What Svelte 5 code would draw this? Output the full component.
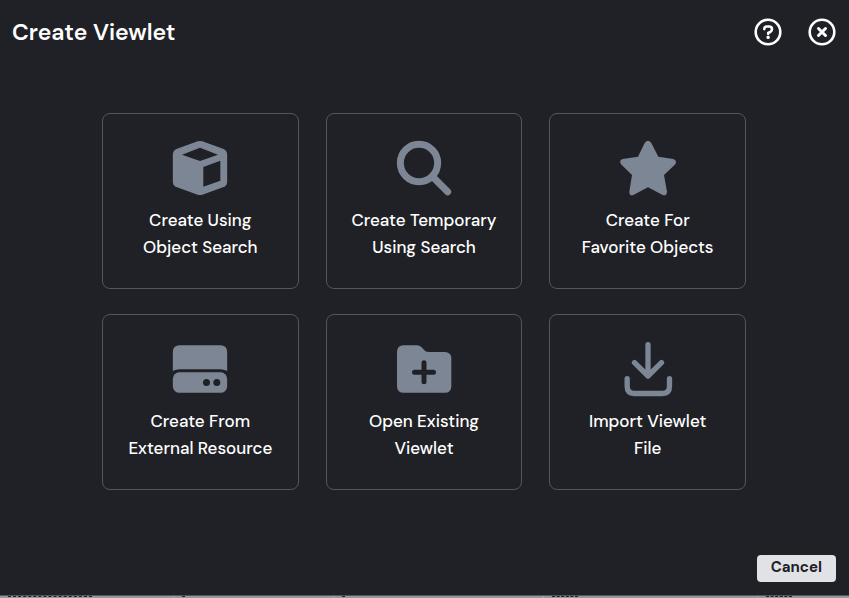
<script>
    const options = [
        { icon: 'cube', lines: ['Create Using', 'Object Search'] },
        { icon: 'search', lines: ['Create Temporary', 'Using Search'] },
        { icon: 'star', lines: ['Create For', 'Favorite Objects'] },
        { icon: 'drive', lines: ['Create From', 'External Resource'] },
        { icon: 'folder', lines: ['Open Existing', 'Viewlet'] },
        { icon: 'import', lines: ['Import Viewlet', 'File'] }
    ];

    let selected = $state(null);
    let open = $state(true);

    const close = () => open = false;
</script>

<div class="page">
    {#if open}
        <div class="dialog" role="dialog" aria-labelledby="dialog-title">
            <header>
                <h1 id="dialog-title">Create Viewlet</h1>
                <div class="actions">
                    <button class="round" aria-label="Help">
                        <svg viewBox="0 0 28 28">
                            <circle cx="14" cy="14" r="12.3" />
                            <path d="M10.3 11.1C10.3 9.4 11.4 8.5 12.9 8.5h2.2c1.6 0 2.9 1.1 2.9 2.7 0 1.2-.6 2-1.6 2.6L14.2 15v.8" />
                            <path d="M14.1 19.3v.1" stroke-width="3.4" />
                        </svg>
                    </button>
                    <button class="round" aria-label="Close" onclick={close}>
                        <svg viewBox="0 0 28 28">
                            <circle cx="14" cy="14" r="12.3" />
                            <path d="M10.5 10.5l7 7M17.5 10.5l-7 7" stroke-width="3" />
                        </svg>
                    </button>
                </div>
            </header>

            <main>
                {#each options as option}
                    <button class="card" onclick={() => selected = option.icon}>
                        <svg class="icon" viewBox="0 0 168 168" aria-hidden="true">
                            {#if option.icon === 'cube'}
                                <path
                                    fill-rule="evenodd"
                                    d="M77 4Q84 2 91 4L153 26Q165.5 31 165.5 44V125Q165.5 137 153 142L91 164Q84 166 77 164L15 142Q2.5 137 2.5 125V44Q2.5 31 15 26ZM30 44L84 63L138 44L84 23ZM94 81V140L145 122V62Z"
                                />
                            {:else if option.icon === 'search'}
                                <g class="line thick">
                                    <circle cx="69" cy="69" r="56" />
                                    <path d="M110 110L155 155" />
                                </g>
                            {:else if option.icon === 'star'}
                                <path d="M74 9Q84 -4 94 9L115 50L160 57Q172 61 166 73L132 105L141 155Q140 169 128 165L84 142L40 165Q28 169 28 155L36 105L3 73Q-4 61 8 57L54 50Z" />
                            {:else if option.icon === 'drive'}
                                <path d="M2.5 90V33Q2.5 12.5 23 12.5H145Q165.5 12.5 165.5 33V90Q157 84.5 145 84.5H23Q11 84.5 2.5 90Z" />
                                <rect x="2.5" y="94" width="163" height="61.5" rx="20" />
                                <circle class="hole" cx="103.5" cy="124.5" r="10.5" />
                                <circle class="hole" cx="134.5" cy="124.5" r="10.5" />
                            {:else if option.icon === 'folder'}
                                <path d="M3 33Q3 12.5 23 12.5H62Q71 12.5 77 19L85 28Q89 33 97 33H146Q166 33 166 53V135Q166 155.5 146 155.5H23Q3 155.5 3 135Z" />
                                <path class="plus" d="M84 65V122M55.5 93.5H112.5" />
                            {:else}
                                <path class="line" d="M84 11V105M43.5 65L84 105L124.5 65M21.5 113V136Q21.5 157.5 43 157.5H127Q148.5 157.5 148.5 136V113" />
                            {/if}
                        </svg>
                        <span>{option.lines[0]}<br />{option.lines[1]}</span>
                    </button>
                {/each}
            </main>

            <footer>
                <button class="cancel" onclick={close}>Cancel</button>
            </footer>
        </div>
    {/if}

    <!-- top edge of the dimmed table behind the dialog -->
    <div class="backdrop" aria-hidden="true">
        <div class="cell"><i class="long"></i></div>
        <div class="cell"><i></i></div>
        <div class="cell"><i></i></div>
        <div class="cell"><i class="short"></i></div>
        <div class="cell"><i class="short"></i></div>
    </div>
</div>

<style>
    :global(body) {
        background: #202126;
    }
    .page {
        display: flex;
        flex-direction: column;
        min-height: 100vh;
        font-family: "DM Sans", Inter, "Open Sans", sans-serif;
        color: #fff;
    }
    .dialog {
        flex: 1;
        display: flex;
        flex-direction: column;
        padding: 12px 13px 13px 12px;
        background: #202126;
    }
    header {
        display: flex;
        align-items: center;
        justify-content: space-between;
        height: 40px;
    }
    h1 {
        margin: 0;
        font-size: 23px;
        font-weight: 600;
        line-height: 28px;
    }
    .actions {
        display: flex;
        gap: 26px;
    }
    button {
        padding: 0;
        border: none;
        background: none;
        color: inherit;
        font-family: inherit;
        cursor: pointer;
    }
    .round,
    .round svg {
        display: block;
        width: 28px;
        height: 28px;
    }
    .round svg {
        fill: none;
        stroke: #fff;
        stroke-width: 2.6;
        stroke-linecap: round;
        stroke-linejoin: round;
    }
    main {
        display: grid;
        grid-template-columns: repeat(3, 1fr);
        gap: 25px 27px;
        width: 100%;
        max-width: 644px;
        margin: 61px auto;
    }
    .card {
        display: flex;
        flex-direction: column;
        align-items: center;
        gap: 11px;
        padding: 26px 8px 27px;
        border: 1px solid #55565a;
        border-radius: 8px;
        font-size: 17px;
        font-weight: 500;
        line-height: 27px;
    }
    .card:hover {
        border-color: #7d8695;
    }
    .icon {
        width: 56px;
        height: 56px;
        fill: #7d8695;
    }
    .line {
        fill: none;
        stroke: #7d8695;
        stroke-width: 16;
        stroke-linecap: round;
        stroke-linejoin: round;
    }
    .thick {
        stroke-width: 21;
    }
    .hole {
        fill: #202126;
    }
    .plus {
        fill: none;
        stroke: #202126;
        stroke-width: 15;
        stroke-linecap: round;
    }
    footer {
        display: flex;
        justify-content: flex-end;
        margin-top: auto;
    }
    .cancel {
        padding: 0 14px 3px;
        border-radius: 4px;
        background: #e1e2e6;
        color: #202126;
        font-size: 15px;
        font-weight: 700;
        line-height: 24px;
    }
    .backdrop {
        display: grid;
        grid-template-columns: 174fr 160fr 210fr 214fr 91fr;
        height: 2px;
        border-top: 1px solid #55565a;
        background: #98989a;
    }
    .cell {
        padding-left: 8px;
        border-right: 1px solid #a8a8aa;
    }
    .cell:last-child {
        border-right: none;
    }
    .cell i {
        display: block;
        width: 3px;
        border-top: 1px dashed #202126;
    }
    .cell .short {
        width: 26px;
    }
    .cell .long {
        width: 84px;
    }
</style>
